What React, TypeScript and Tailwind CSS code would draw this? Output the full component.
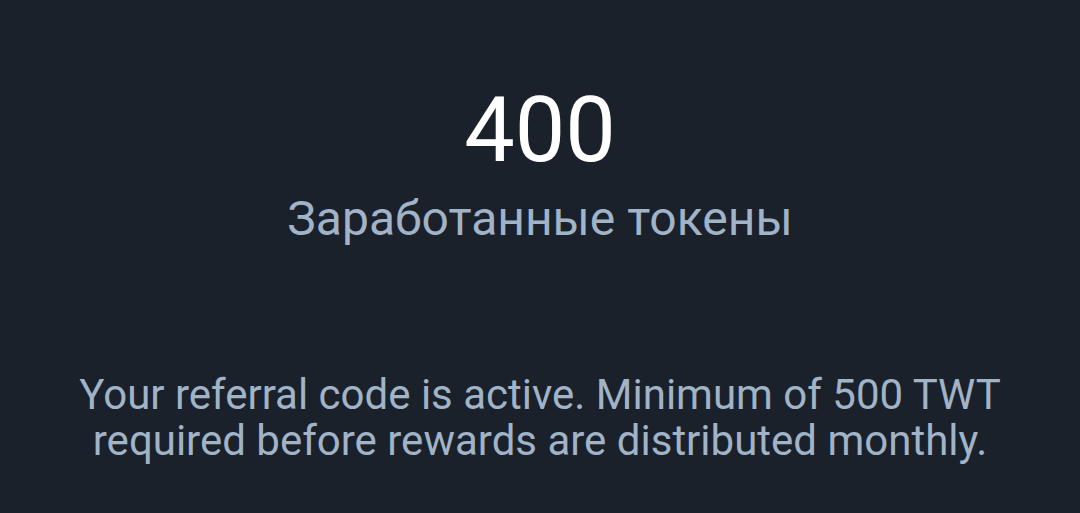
export default function App() {
  return (
    <div className="flex h-[513px] w-[1080px] flex-col items-center bg-[#1a212b] font-['Roboto',sans-serif] text-center">
      <div className="mt-[76px] text-[90px] leading-[110px] text-white">400</div>
      <div className="mt-[5px] text-[48px] leading-[56px] text-[#a0b3c7]">Заработанные токены</div>
      <p className="mt-[125px] px-[60px] text-[42px] leading-[46px] text-[#a0b3c7]">
        Your referral code is active. Minimum of 500 TWT required before rewards are distributed
        monthly.
      </p>
    </div>
  );
}
